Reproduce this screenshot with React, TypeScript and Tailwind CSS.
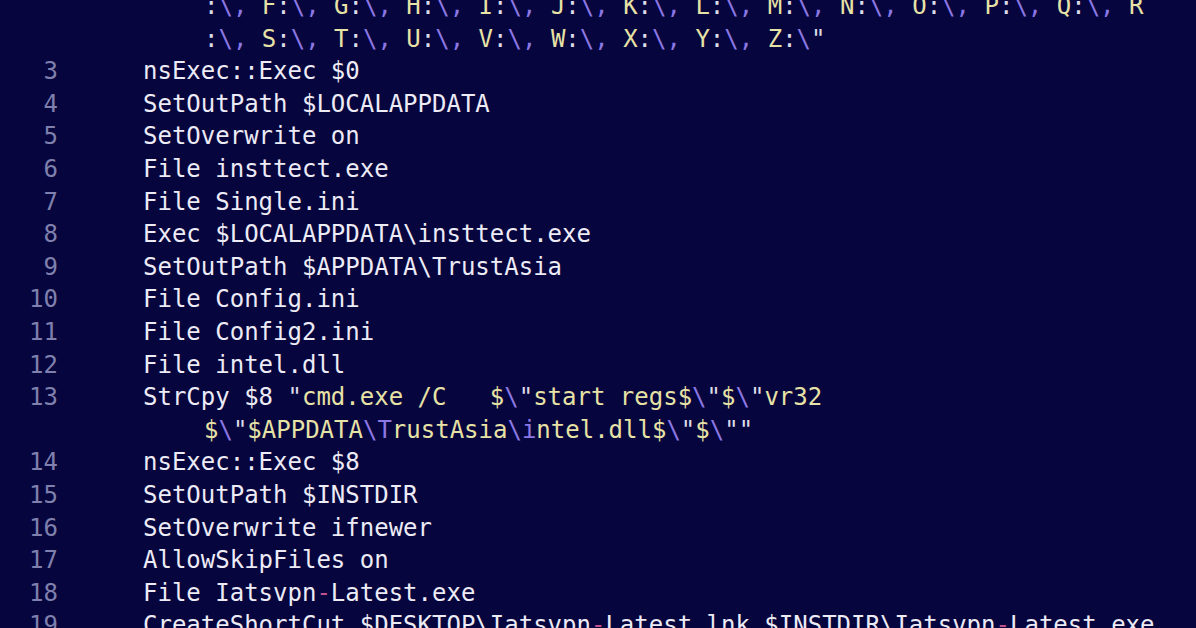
type Seg = [string, string];

const W = "text-[#ecebf6]";
const Y = "text-[#e7e2a6]";
const P = "text-[#8b78e4]";
const K = "text-[#c2508c]";
const C = "text-[#dcdbe8]";

type Row = { n?: number; cont?: boolean; segs: Seg[] };

function drives(letters: string[], last: string, end: boolean): Seg[] {
  const out: Seg[] = [[":", C], ["\\", P], [", ", P]];
  letters.forEach((l) => {
    out.push([l, Y], [":", C], ["\\", P], [", ", P]);
  });
  if (end) {
    out.push([last, Y], [":", C], ["\\", P], ['"', C]);
  } else {
    out.push([last, Y]);
  }
  return out;
}

const rows: Row[] = [
  { cont: true, segs: drives(["F", "G", "H", "I", "J", "K", "L", "M", "N", "O", "P", "Q"], "R", false) },
  { cont: true, segs: drives(["S", "T", "U", "V", "W", "X", "Y"], "Z", true) },
  { n: 3, segs: [["nsExec::Exec $0", W]] },
  { n: 4, segs: [["SetOutPath $LOCALAPPDATA", W]] },
  { n: 5, segs: [["SetOverwrite on", W]] },
  { n: 6, segs: [["File insttect.exe", W]] },
  { n: 7, segs: [["File Single.ini", W]] },
  { n: 8, segs: [["Exec $LOCALAPPDATA\\insttect.exe", W]] },
  { n: 9, segs: [["SetOutPath $APPDATA\\TrustAsia", W]] },
  { n: 10, segs: [["File Config.ini", W]] },
  { n: 11, segs: [["File Config2.ini", W]] },
  { n: 12, segs: [["File intel.dll", W]] },
  {
    n: 13,
    segs: [
      ["StrCpy $8 ", W],
      ['"', C],
      ["cmd.exe /C   $", Y],
      ["\\", P],
      ['"', C],
      ["start regs$", Y],
      ["\\", P],
      ['"', C],
      ["$", Y],
      ["\\", P],
      ['"', C],
      ["vr32", Y],
    ],
  },
  {
    cont: true,
    segs: [
      ["$", Y],
      ["\\", P],
      ['"', C],
      ["$APPDATA", Y],
      ["\\T", P],
      ["rustAsia", Y],
      ["\\i", P],
      ["ntel.dll$", Y],
      ["\\", P],
      ['"', C],
      ["$", Y],
      ["\\", P],
      ['""', C],
    ],
  },
  { n: 14, segs: [["nsExec::Exec $8", W]] },
  { n: 15, segs: [["SetOutPath $INSTDIR", W]] },
  { n: 16, segs: [["SetOverwrite ifnewer", W]] },
  { n: 17, segs: [["AllowSkipFiles on", W]] },
  { n: 18, segs: [["File Iatsvpn", W], ["-", K], ["Latest.exe", W]] },
  {
    n: 19,
    segs: [
      ["CreateShortCut $DESKTOP\\Iatsvpn", W],
      ["-", K],
      ["Latest.lnk $INSTDIR\\Iatsvpn", W],
      ["-", K],
      ["Latest.exe", W],
    ],
  },
];

export default function App() {
  return (
    <div className="w-[1196px] h-[628px] overflow-hidden bg-[#07053d] font-['DejaVu_Sans_Mono',monospace] text-[24px] leading-[32.6px]">
      <div className="-mt-[10px]">
        {rows.map((r, i) => (
          <div key={i} className="flex whitespace-pre">
            <div className="w-[58px] shrink-0 text-right text-[#7f80ad]">{r.n ?? ""}</div>
            <div className={r.cont ? "ml-[146px]" : "ml-[85px]"}>
              {r.segs.map(([t, c], j) => (
                <span key={j} className={c}>
                  {t}
                </span>
              ))}
            </div>
          </div>
        ))}
      </div>
    </div>
  );
}
